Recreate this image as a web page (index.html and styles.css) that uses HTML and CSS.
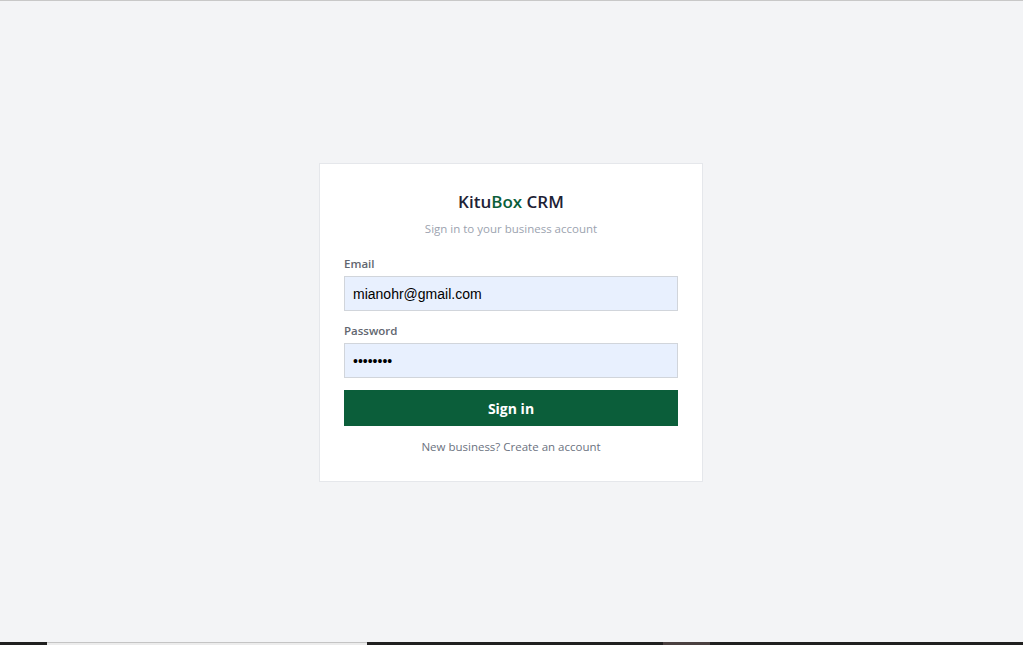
FILE: index.html
```html
<!DOCTYPE html>
<html lang="en">
<head>
  <meta charset="UTF-8" />
  <meta name="viewport" content="width=device-width, initial-scale=1.0"/>
  <title>KituBox CRM - Sign in</title>
  <link rel="stylesheet" href="styles.css">
</head>
<body>
  <div class="page">
    <form class="card" onsubmit="return false">
      <div class="card-head">
        <h1 class="brand">Kitu<span class="brand-accent">Box</span> CRM</h1>
        <p class="subtitle">Sign in to your business account</p>
      </div>

      <div class="field">
        <label for="email">Email</label>
        <input id="email" type="email" value="mianohr@gmail.com" />
      </div>

      <div class="field">
        <label for="password">Password</label>
        <input id="password" type="password" value="secret12" />
      </div>

      <button type="submit" class="btn-primary">Sign in</button>

      <p class="switch-link"><a href="#">New business? Create an account</a></p>
    </form>
  </div>

  <div class="taskbar">
    <span class="tb-dark tb-a"></span>
    <span class="tb-light"></span>
    <span class="tb-dark tb-b"></span>
    <span class="tb-brown"></span>
    <span class="tb-dark tb-c"></span>
  </div>
</body>
</html>
```

FILE: styles.css
```css
body {
  margin: 0;
  font-family: "Open Sans", "Noto Sans", sans-serif;
  background: #f3f4f6;
  color: #111827;
  box-shadow: inset 0 1px 0 #c8c8c8;
  height: 100vh;
  overflow: hidden;
}

.page {
  display: flex;
  align-items: center;
  justify-content: center;
  height: 100%;
}

.card {
  width: 384px;
  box-sizing: border-box;
  margin-right: 1px;
  background: #ffffff;
  border: 1px solid #e5e7eb;
  padding: 25px 24px 22px;
  display: flex;
  flex-direction: column;
}

.card-head {
  text-align: center;
  margin-bottom: 18px;
}

.brand {
  margin: 0;
  font-size: 17px;
  line-height: 26px;
  font-weight: 600;
  color: #1e2235;
}

.brand-accent {
  color: #0b5e3a;
}

.subtitle {
  margin: 5px 0 0;
  font-size: 11.5px;
  line-height: 18px;
  color: #9ca3af;
}

.field {
  display: flex;
  flex-direction: column;
  gap: 4px;
  margin-bottom: 12px;
}

.field label {
  font-size: 11.5px;
  line-height: 16px;
  font-weight: 600;
  color: #62666f;
}

.field input {
  height: 35px;
  box-sizing: border-box;
  border: 1px solid #d1d5db;
  background: #e8f0fe;
  padding: 0 8px;
  font-family: "Liberation Sans", Arial, sans-serif;
  font-size: 14px;
  color: #000;
  outline: none;
}

.btn-primary {
  height: 36px;
  border: none;
  background: #0b5e3a;
  color: #ffffff;
  font-family: inherit;
  font-size: 14px;
  font-weight: 700;
  cursor: pointer;
}

.switch-link {
  margin: 13px 0 4px;
  text-align: center;
  font-size: 11.5px;
  line-height: 16px;
}

.switch-link a {
  color: #6b7280;
  text-decoration: none;
}

.taskbar {
  position: fixed;
  left: 0;
  right: 0;
  bottom: 0;
  height: 3px;
  display: flex;
}

.taskbar span {
  height: 100%;
}

.tb-dark {
  background: #202020;
}

.tb-a { width: 47px; }
.tb-b { width: 296px; }
.tb-c { flex: 1; }

.tb-light {
  width: 320px;
  background: #ececec;
  border-top: 1px solid #c4c4c4;
  box-sizing: border-box;
}

.tb-brown {
  width: 47px;
  background: #4a4040;
}
```
